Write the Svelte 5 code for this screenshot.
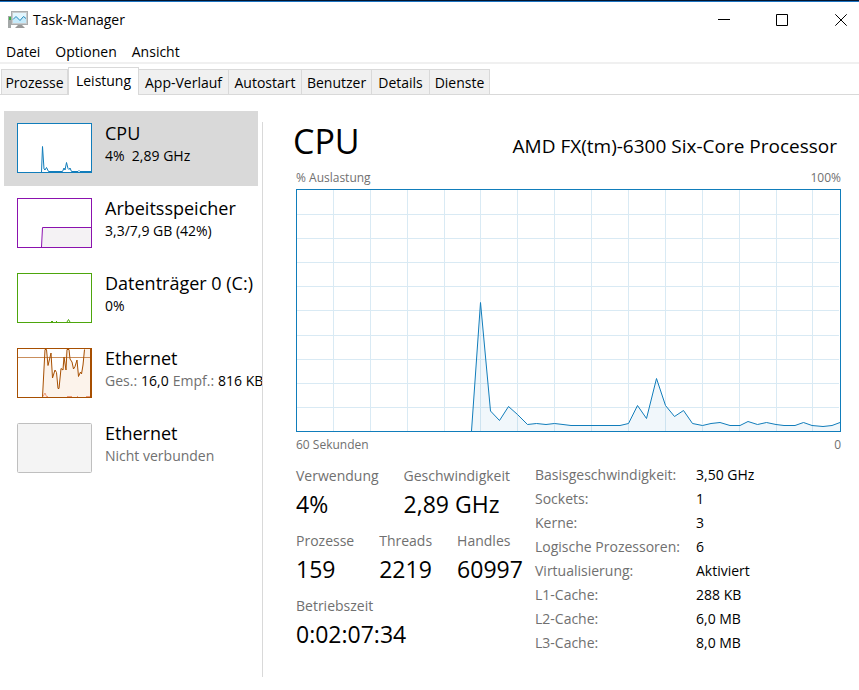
<script>
    let activeTab = $state("Leistung");
    let selected = $state(0);

    const menu = ["Datei", "Optionen", "Ansicht"];
    const tabs = ["Prozesse", "Leistung", "App-Verlauf", "Autostart", "Benutzer", "Details", "Dienste"];

    // load curve, 545 x 243 units
    const load = "175.5,242 184.5,113.5 194.5,222 203.5,231.5 212.5,217.5 221.5,225.5 231.5,235.5 240.5,234.5 250,235.5 258.5,234.5 267,235.5 275,236.5 324,236.5 332.5,234.5 341.5,216.5 350.5,229.5 360.5,189.5 369.5,216.5 378.5,227.5 387.5,221.5 396.5,234.5 406.5,236.5 415,234.5 424,233.5 434,236.5 444,236.5 452,232.5 461.5,235.5 470.5,233.5 480,235.5 488,236.5 499,236.5 507.5,233.5 516,236.5 527,237.5 536,236.5 544,233.5";

    const columns = [37, 74, 111, 148, 184, 221, 258, 295, 332, 369, 406, 443, 480, 516];
    const rows = [25, 49, 73, 97, 121, 146, 170, 194, 218];

    const devices = [
        { name: "CPU", kind: "cpu", info: [["", "4%  2,89 GHz"]] },
        { name: "Arbeitsspeicher", kind: "memory", info: [["", "3,3/7,9 GB (42%)"]] },
        { name: "Datenträger 0 (C:)", kind: "disk", info: [["", "0%"]] },
        { name: "Ethernet", kind: "net", info: [["Ges.:", "16,0"], ["Empf.:", "816 KB"]] },
        { name: "Ethernet", kind: "off", info: [["Nicht verbunden", ""]] }
    ];

    const stats = [
        [["Verwendung", "4%"], ["Geschwindigkeit", "2,89 GHz"]],
        [["Prozesse", "159"], ["Threads", "2219"], ["Handles", "60997"]],
        [["Betriebszeit", "0:02:07:34"]]
    ];

    const specs = [
        ["Basisgeschwindigkeit:", "3,50 GHz"],
        ["Sockets:", "1"],
        ["Kerne:", "3"],
        ["Logische Prozessoren:", "6"],
        ["Virtualisierung:", "Aktiviert"],
        ["L1-Cache:", "288 KB"],
        ["L2-Cache:", "6,0 MB"],
        ["L3-Cache:", "8,0 MB"]
    ];
</script>

<div class="window">
    <header class="titlebar">
        <svg class="app-icon" width="20" height="18" viewBox="0 0 20 18" aria-hidden="true">
            <rect x="0" y="5" width="3" height="12" fill="#a4a8a8" />
            <rect x="1" y="6" width="2" height="3" fill="#3fae49" />
            <path d="M7 17l3-3h4l3 3z" fill="#999" />
            <rect x="3.5" y="0.5" width="16" height="13" fill="#c9cccd" stroke="#a9acad" />
            <rect x="5" y="2" width="13" height="10" fill="#e2f6fe" />
            <path d="M5 8.500l3-3 4 4 3.500-4 2.500 2V12H5z" fill="#c6eafa" />
            <path d="M5 8.500l3-3 4 4 3.500-4 2.500 2" fill="none" stroke="#2487b8" />
        </svg>
        <h1>Task-Manager</h1>
        <div class="controls">
            <button type="button" aria-label="Minimieren">
                <svg width="12" height="12" viewBox="0 0 12 12"><path d="M0 5.500h12" /></svg>
            </button>
            <button type="button" aria-label="Maximieren">
                <svg width="12" height="12" viewBox="0 0 12 12"><path d="M.5.5h11v11H.5z" /></svg>
            </button>
            <button type="button" aria-label="Schließen">
                <svg width="12" height="12" viewBox="0 0 12 12"><path d="M.3.3l11.400 11.400M11.700.3L.3 11.700" /></svg>
            </button>
        </div>
    </header>

    <nav class="menu">
        {#each menu as entry}
            <button type="button">{entry}</button>
        {/each}
    </nav>

    <div class="tabs" role="tablist">
        {#each tabs as tab}
            <button
                type="button"
                role="tab"
                aria-selected={activeTab === tab}
                class:active={activeTab === tab}
                onclick={() => (activeTab = tab)}>{tab}</button>
        {/each}
    </div>

    <div class="content">
        <aside>
            {#each devices as device, i}
                <button type="button" class="device" class:selected={selected === i} onclick={() => (selected = i)}>
                    <svg class="thumb {device.kind}" width="75" height="50" viewBox="0 0 75 50" aria-hidden="true">
                        <rect class="frame" x="0.5" y="0.5" width="74" height="49" />
                        {#if device.kind === "cpu"}
                            <path class="line" d="M24.500 49L25.500 23.500L27 46L28 47L29.500 44.500L31.500 48.500H45.500L47 45L48 47L49.500 39.500L51 45.500L52 46.500L53 45L54.500 48.500H61L62 47.500L63 48.500H74" />
                        {:else if device.kind === "memory"}
                            <path class="area" d="M25 49L26 30H74V49z" />
                            <path class="line" d="M24.500 49L25.500 29.500H74" />
                        {:else if device.kind === "disk"}
                            <path class="line" d="M34 48.500h2M39 48.500h1M50 49l1.500-2.500L53 49" />
                        {:else if device.kind === "net"}
                            <path class="area" d="M25.500 49L28.500 1L31 17L34 5L35 30L38 22L41 40L44 21L47 9L51 1L57 21L60 12L62 29L65 24L67 1H74V49z" />
                            <path class="limit" d="M1 9.500H73" />
                            <path class="line" d="M25.500 49L28 1.500H29.500L31 17.500L34 5L35.500 30L38 22L39.500 24.500L41 40.500H42L44 20.500L46 22L47 9L49 22L50 1.500H52L53 11L55 14L56.500 21L58 18.500L60 12L61.500 28.500L63.500 24L64.500 26L66 17L67.500 1.500" />
                            <path class="sent" d="M26 48.500L28 45L29.500 48.500H31M50 48.500h5M60 48.500h1M69 48.500h4" />
                            <path class="line" d="M73.500 1V49" />
                        {/if}
                    </svg>
                    <span class="text">
                        <span class="name">{device.name}</span>
                        <span class="info">
                            {#each device.info as [label, value]}
                                {#if label}<span class="muted">{label}</span>{/if}
                                {#if value}<span>{value}</span>{/if}
                            {/each}
                        </span>
                    </span>
                </button>
            {/each}
        </aside>

        <main>
            <div class="heading">
                <h2>CPU</h2>
                <p>AMD FX(tm)-6300 Six-Core Processor</p>
            </div>
            <div class="scale top"><span>% Auslastung</span><span>100%</span></div>
            <svg class="chart" viewBox="0 0 545 243" role="img" aria-label="CPU-Auslastung">
                {#each columns as x}
                    <path class="grid" d="M{x + 0.5} 1V242" />
                {/each}
                {#each rows as y}
                    <path class="grid" d="M1 {y + 0.5}H543" />
                {/each}
                <polygon class="fill" points="{load} 544,242" />
                <polyline class="curve" points={load} />
                <rect class="border" x="0.5" y="0.5" width="544" height="242" />
            </svg>
            <div class="scale bottom"><span>60 Sekunden</span><span>0</span></div>

            <div class="details">
                <div class="stats">
                    {#each stats as row}
                        <dl>
                            {#each row as [label, value]}
                                <div>
                                    <dt>{label}</dt>
                                    <dd>{value}</dd>
                                </div>
                            {/each}
                        </dl>
                    {/each}
                </div>
                <table>
                    <tbody>
                        {#each specs as [label, value]}
                            <tr>
                                <th scope="row">{label}</th>
                                <td>{value}</td>
                            </tr>
                        {/each}
                    </tbody>
                </table>
            </div>
        </main>
    </div>
</div>

<style>
    :global(body) {
        margin: 0;
        background: #fff;
    }

    * {
        box-sizing: border-box;
    }

    .window {
        display: flex;
        flex-direction: column;
        min-height: 100vh;
        border-top: 1px solid #02152f;
        box-shadow: inset 0 1px #1b72c0;
        background: #fff;
        color: #000;
        font-family: "Open Sans", "Noto Sans", sans-serif;
        font-size: 14px;
        line-height: 20px;
    }

    button {
        margin: 0;
        padding: 0;
        border: 0;
        background: none;
        color: inherit;
        font: inherit;
    }

    h1, h2, p, dl, dd {
        margin: 0;
        font-weight: 400;
    }

    .titlebar {
        display: flex;
        align-items: center;
        height: 38px;
        padding-left: 8px;
    }

    h1 {
        margin-left: 5px;
        font-size: 14px;
    }

    .controls {
        display: flex;
        margin-left: auto;
    }

    .controls button {
        display: flex;
        justify-content: center;
        align-items: center;
        width: 58px;
        height: 38px;
    }

    .controls button:last-child {
        width: 48px;
        padding-left: 12px;
    }

    .controls path {
        fill: none;
        stroke: #000;
    }

    .menu {
        display: flex;
        gap: 15px;
        height: 25px;
        padding: 3px 6px 0;
        border-bottom: 2px solid #f0f0f0;
    }

    .tabs {
        display: grid;
        grid-template-columns: 67px 71px 90px 73px 70px 58px 60px;
        align-items: end;
        height: 31px;
        padding-left: 1px;
        box-shadow: inset 0 -1px #d9d9d9;
    }

    .tabs button {
        height: 26px;
        padding-top: 2px;
        border: 1px solid #d9d9d9;
        border-left-width: 0;
        background: #f0f0f0;
        white-space: nowrap;
    }

    .tabs button:first-child {
        border-left-width: 1px;
    }

    .tabs .active {
        height: 28px;
        padding-bottom: 4px;
        border-left-width: 1px;
        border-bottom: 0;
        background: #fff;
    }

    .content {
        display: flex;
        flex: 1;
        padding: 16px 18px 13px 4px;
    }

    aside {
        flex: 0 0 259px;
        overflow: hidden;
        border-right: 1px solid #d9d9d9;
        border-image: linear-gradient(transparent 12px, #d9d9d9 12px) 1;
    }

    .device {
        display: flex;
        gap: 13px;
        width: 254px;
        height: 75px;
        padding: 10px 0 0 13px;
        text-align: left;
        white-space: nowrap;
    }

    .selected {
        background: #d9d9d9;
    }

    .thumb {
        flex: none;
        margin-top: 2px;
    }

    .text {
        display: flex;
        flex-direction: column;
    }

    .name {
        font-size: 18px;
        line-height: 24px;
    }

    .info {
        display: flex;
        gap: 4px;
        line-height: 22px;
        white-space: pre;
    }

    .muted {
        color: #707070;
    }

    .thumb path {
        fill: none;
    }

    .frame {
        fill: #fff;
    }

    .cpu .frame, .cpu .line {
        stroke: #117dbb;
    }

    .memory .frame, .memory .line {
        stroke: #8b12ae;
    }

    .memory .area {
        fill: #f4f2f4;
    }

    .disk .frame, .disk .line {
        stroke: #4da60c;
    }

    .net .frame, .net .line {
        stroke: #a74f01;
    }

    .net .area {
        fill: #fcf3eb;
    }

    .net .limit {
        stroke: #c98e5c;
    }

    .net .sent {
        stroke: #ee9a78;
    }

    .off .frame {
        fill: #f4f4f4;
        stroke: #bfbfbf;
        rx: 1px;
    }

    main {
        flex: 1;
        min-width: 0;
        padding-left: 33px;
    }

    .heading {
        display: flex;
        justify-content: space-between;
        height: 57px;
        padding-right: 4px;
        white-space: nowrap;
    }

    h2 {
        margin-left: -3px;
        font-size: 34px;
        line-height: 60px;
    }

    .heading p {
        font-size: 19px;
        line-height: 70px;
    }

    .scale {
        display: flex;
        justify-content: space-between;
        color: #707070;
        font-size: 12px;
    }

    .top {
        height: 21px;
    }

    .bottom {
        height: 33px;
        padding-top: 3px;
    }

    .chart {
        display: block;
        width: 100%;
    }

    .grid {
        stroke: #d9eaf4;
    }

    .fill {
        fill: #117dbb;
        fill-opacity: 0.06;
    }

    .curve, .border {
        fill: none;
        stroke: #117dbb;
    }

    .details {
        display: flex;
        align-items: flex-start;
    }

    .stats {
        flex: 0 0 239px;
    }

    dl {
        display: flex;
        gap: 25px;
        height: 65px;
        white-space: nowrap;
    }

    dt {
        color: #707070;
        line-height: 22px;
    }

    dd {
        font-size: 23px;
        line-height: 34px;
    }

    table {
        border-collapse: collapse;
        white-space: nowrap;
    }

    th, td {
        height: 24px;
        padding: 0;
        font-weight: 400;
        line-height: 20px;
        text-align: left;
        vertical-align: top;
    }

    th {
        width: 161px;
        color: #707070;
    }
</style>
